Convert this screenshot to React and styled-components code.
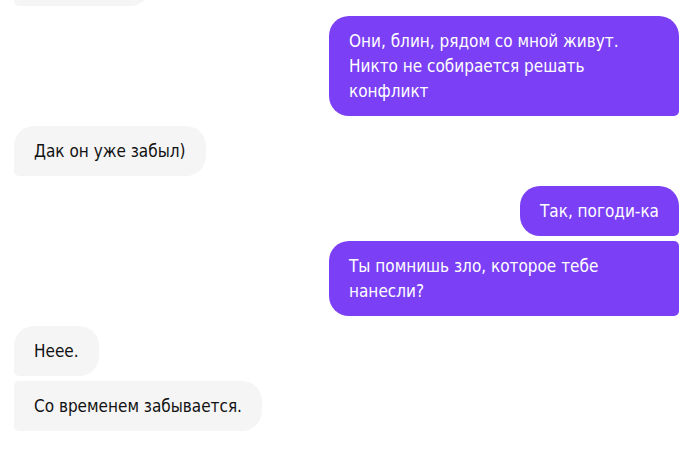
import styled, { createGlobalStyle, css } from 'styled-components'

const GlobalStyle = createGlobalStyle`
  html, body {
    margin: 0;
    padding: 0;
    background: #ffffff;
    overflow: hidden;
  }
`

const Chat = styled.div`
  height: 453px;
  overflow: hidden;
  box-sizing: border-box;
  padding: 0 15px 0 14px;
  font-family: "DejaVu Sans Condensed", "DejaVu Sans", sans-serif;
  font-stretch: condensed;
  font-size: 17px;
`

const Feed = styled.div`
  display: flex;
  flex-direction: column;
  gap: 5px;
  margin-top: -44px;
`

const Bubble = styled.div`
  box-sizing: border-box;
  max-width: 350px;
  padding: 12.5px 20px;
  line-height: 25px;
  border-radius: 20px;
  ${({ $own }) => $own ? css`
    align-self: flex-end;
    background: #7b3ff5;
    color: #ffffff;
    border-bottom-right-radius: 5px;
  ` : css`
    align-self: flex-start;
    background: #f5f5f5;
    color: #111111;
    border-bottom-left-radius: 5px;
  `}
  ${({ $own, $cont }) => $cont && ($own
    ? css`border-top-right-radius: 5px;`
    : css`border-top-left-radius: 5px;`)}
  ${({ $newGroup }) => $newGroup && css`margin-top: 5px;`}
`

const messages = [
  { own: false, text: 'Ну и пускай' },
  { own: true, text: 'Они, блин, рядом со мной живут. Никто не собирается решать конфликт' },
  { own: false, text: 'Дак он уже забыл)' },
  { own: true, text: 'Так, погоди-ка' },
  { own: true, text: 'Ты помнишь зло, которое тебе нанесли?' },
  { own: false, text: 'Неее.' },
  { own: false, text: 'Со временем забывается.' },
]

export default function App() {
  return (
    <>
      <GlobalStyle />
      <Chat>
        <Feed>
          {messages.map((m, i) => {
            const prev = messages[i - 1]
            const cont = prev && prev.own === m.own
            return (
              <Bubble key={i} $own={m.own} $cont={cont} $newGroup={prev && !cont}>
                {m.text}
              </Bubble>
            )
          })}
        </Feed>
      </Chat>
    </>
  )
}
